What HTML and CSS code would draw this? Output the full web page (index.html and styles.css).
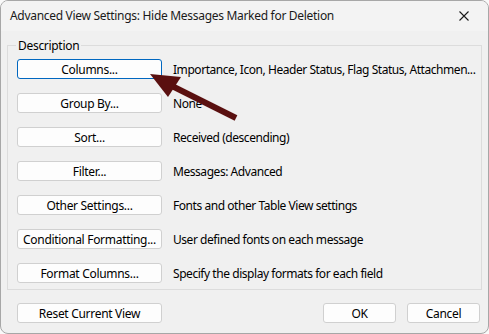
FILE: index.html
```html
<!DOCTYPE html>
<html lang="en">
<head>
    <meta charset="UTF-8">
    <meta name="viewport" content="width=device-width, initial-scale=1.0">
    <title>Advanced View Settings</title>
    <link rel="stylesheet" href="styles.css">
</head>
<body>
    <div class="window">
        <!-- Title bar -->
        <div class="titlebar">
            <span class="title">Advanced View Settings: Hide Messages Marked for Deletion</span>
            <button class="close" aria-label="Close">
                <svg width="10" height="10" viewBox="0 0 10 10">
                    <path d="M0.5 0.5 L9.5 9.5 M9.5 0.5 L0.5 9.5" stroke="#1a1a1a" stroke-width="1.1" fill="none"/>
                </svg>
            </button>
        </div>

        <div class="content">
            <fieldset class="group">
                <legend>Description</legend>
                <div class="row">
                    <button class="btn focused">Columns...</button>
                    <span class="desc">Importance, Icon, Header Status, Flag Status, Attachmen...</span>
                </div>
                <div class="row">
                    <button class="btn">Group By...</button>
                    <span class="desc">None</span>
                </div>
                <div class="row">
                    <button class="btn">Sort...</button>
                    <span class="desc">Received (descending)</span>
                </div>
                <div class="row">
                    <button class="btn">Filter...</button>
                    <span class="desc">Messages: Advanced</span>
                </div>
                <div class="row">
                    <button class="btn">Other Settings...</button>
                    <span class="desc">Fonts and other Table View settings</span>
                </div>
                <div class="row">
                    <button class="btn">Conditional Formatting...</button>
                    <span class="desc">User defined fonts on each message</span>
                </div>
                <div class="row">
                    <button class="btn">Format Columns...</button>
                    <span class="desc">Specify the display formats for each field</span>
                </div>
            </fieldset>

            <div class="footer">
                <button class="btn">Reset Current View</button>
                <div class="actions">
                    <button class="btn small">OK</button>
                    <button class="btn small">Cancel</button>
                </div>
            </div>
        </div>

        <!-- Annotation arrow pointing at Columns -->
        <svg class="arrow" width="489" height="334" viewBox="0 0 489 334">
            <line x1="236" y1="118" x2="170" y2="85" stroke="#5a1010" stroke-width="6"/>
            <polygon points="150,74 181,77 168,97" fill="#5a1010"/>
        </svg>
    </div>
</body>
</html>
```

FILE: styles.css
```css
html, body {
    margin: 0;
    padding: 0;
    background-color: #f9f9f9;
}
body {
    font-family: "Noto Sans", "Open Sans", sans-serif;
    font-size: 12px;
    letter-spacing: -0.3px;
    color: #000;
}
.window {
    position: relative;
    width: 489px;
    height: 334px;
    box-sizing: border-box;
    border: 1px solid #a7a7a7;
    border-radius: 8px;
    background-color: #f0f0f0;
    overflow: hidden;
}
.titlebar {
    height: 30px;
    background-color: #f3f3f3;
    display: flex;
    align-items: center;
    justify-content: space-between;
    padding: 0 0 0 9px;
}
.title {
    color: #1a1a1a;
    margin-top: -1px;
}
.close {
    width: 40px;
    height: 30px;
    border: none;
    background: none;
    padding: 0;
    display: flex;
    align-items: center;
    justify-content: center;
    margin-right: 4px;
}
.content {
    padding: 0 6px;
}
.group {
    margin: 6px 0 0 0;
    padding: 5px 9px 6px 9px;
    border: 1px solid #dcdcdc;
    min-width: 0;
}
.group legend {
    padding: 0 2px;
    margin-left: -1px;
    color: #000;
}
.row {
    display: flex;
    align-items: center;
    gap: 11px;
    margin-bottom: 14px;
}
.row:last-child {
    margin-bottom: 0;
}
.btn {
    width: 145px;
    height: 20px;
    box-sizing: border-box;
    font-family: inherit;
    font-size: 12px;
    letter-spacing: -0.3px;
    color: #000;
    background-color: #fdfdfd;
    border: 1px solid #d0d0d0;
    border-radius: 3px;
    padding: 0;
    flex-shrink: 0;
}
.btn.focused {
    border-color: #0067c0;
}
.btn.small {
    width: 73px;
}
.desc {
    white-space: nowrap;
    letter-spacing: -0.45px;
    color: #000;
}
.footer {
    display: flex;
    justify-content: space-between;
    margin-top: 13px;
    padding: 0 2px 0 10px;
}
.actions {
    display: flex;
    gap: 11px;
}
.arrow {
    position: absolute;
    left: -1px;
    top: -1px;
    pointer-events: none;
}
```
